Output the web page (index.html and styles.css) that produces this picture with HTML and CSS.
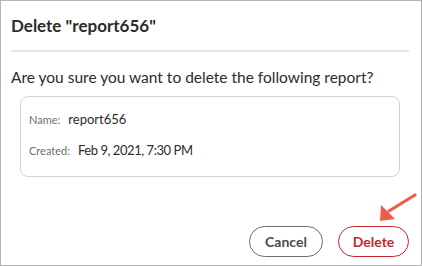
FILE: index.html
```html
<!DOCTYPE html>
<html lang="en">
<head>
  <meta charset="UTF-8" />
  <title>Delete report</title>
  <link rel="stylesheet" href="styles.css">
</head>
<body>
  <div class="dialog">
    <h2 class="dialog-title">Delete "report656"</h2>
    <div class="divider"></div>
    <p class="message">Are you sure you want to delete the following report?</p>
    <div class="details">
      <div class="row"><span class="label">Name:</span><span class="value">report656</span></div>
      <div class="row"><span class="label">Created:</span><span class="value value-date">Feb 9, 2021, 7:30 PM</span></div>
    </div>
    <div class="actions">
      <button class="btn btn-cancel">Cancel</button>
      <button class="btn btn-delete">Delete</button>
    </div>
    <!-- callout arrow pointing at the delete button -->
    <svg class="callout" width="42" height="34" viewBox="0 0 42 34">
      <line x1="38" y1="4" x2="12" y2="20" stroke="#ea5d4a" stroke-width="3.2" stroke-linecap="round" />
      <polygon points="3,30 4,14 18,28" fill="#ea5d4a" />
    </svg>
  </div>
</body>
</html>
```

FILE: styles.css
```css
html, body {
  margin: 0;
  background: #fff;
}
body {
  font-family: 'Lato', sans-serif;
  color: #2c2c2c;
}
.dialog {
  position: relative;
  box-sizing: border-box;
  width: 422px;
  height: 266px;
  border: 1px solid #b4b4b4;
  padding: 0 12px 0 10px;
}
.dialog-title {
  margin: 0;
  padding-top: 13px;
  font-size: 17px;
  line-height: 24px;
  font-weight: 700;
  color: #2c2c2c;
}
.divider {
  height: 2px;
  background: #e3e3e3;
  margin-top: 12px;
}
.message {
  margin: 16px 0 0;
  font-size: 15.5px;
  line-height: 18px;
}
.details {
  margin: 10px 9px 0;
  height: 81px;
  box-sizing: border-box;
  border: 1.5px solid #d3d3d3;
  border-radius: 8px;
  padding: 12px 8px 0;
}
.row {
  display: flex;
  align-items: baseline;
  height: 31px;
  line-height: 20px;
}
.label {
  font-size: 11px;
  color: #6e6e6e;
  margin-right: 8px;
}
.value {
  font-size: 13px;
  color: #2c2c2c;
}
.value-date {
  letter-spacing: -0.45px;
}
.actions {
  display: flex;
  justify-content: flex-end;
  gap: 15px;
  margin-top: 49px;
}
.btn {
  box-sizing: border-box;
  height: 31px;
  padding: 0;
  border-radius: 16px;
  background: #fff;
  font-family: 'Lato', sans-serif;
  font-size: 14px;
  font-weight: 700;
  cursor: pointer;
}
.btn-cancel {
  width: 74px;
  border: 1.5px solid #6e6e6e;
  color: #4b4b4b;
}
.btn-delete {
  width: 71px;
  border: 1.5px solid #c9252d;
  color: #c9252d;
}
.callout {
  position: absolute;
  left: 376px;
  top: 190px;
}
```
